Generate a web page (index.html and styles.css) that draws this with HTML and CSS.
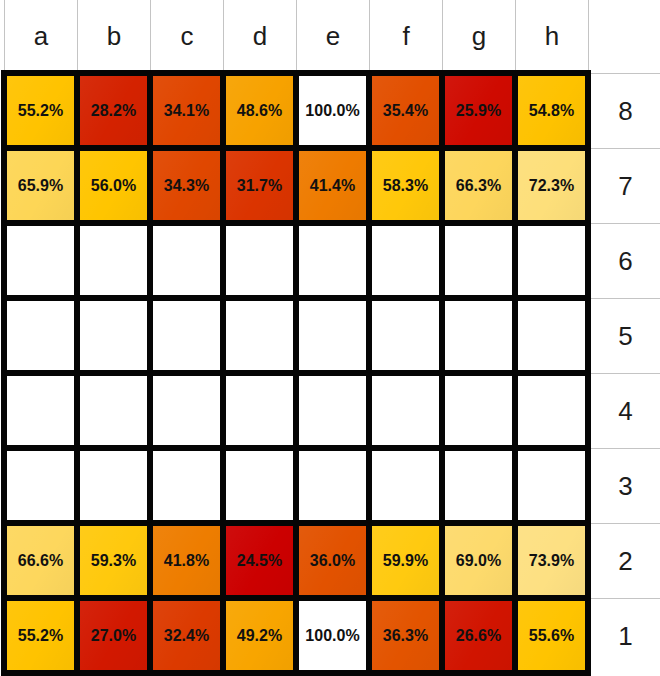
FILE: index.html
```html
<!DOCTYPE html>
<html>
<head>
<meta charset="utf-8">
<link rel="stylesheet" href="styles.css">
</head>
<body>
<div class="sheet">
  <div class="files">
    <div class="file">a</div><div class="file">b</div><div class="file">c</div><div class="file">d</div>
    <div class="file">e</div><div class="file">f</div><div class="file">g</div><div class="file">h</div>
    <div class="corner"></div>
  </div>
  <div class="body">
    <div class="board">
      <div class="sq heat" style="background-color:#ffc300">55.2%</div>
      <div class="sq heat" style="background-color:#d42200">28.2%</div>
      <div class="sq heat" style="background-color:#e04600">34.1%</div>
      <div class="sq heat" style="background-color:#f7a200">48.6%</div>
      <div class="sq">100.0%</div>
      <div class="sq heat" style="background-color:#e24f00">35.4%</div>
      <div class="sq heat" style="background-color:#cf0a00">25.9%</div>
      <div class="sq heat" style="background-color:#fec200">54.8%</div>

      <div class="sq heat" style="background-color:#fdd656">65.9%</div>
      <div class="sq heat" style="background-color:#ffc500">56.0%</div>
      <div class="sq heat" style="background-color:#e04700">34.3%</div>
      <div class="sq heat" style="background-color:#db3400">31.7%</div>
      <div class="sq heat" style="background-color:#ee7b00">41.4%</div>
      <div class="sq heat" style="background-color:#ffc80a">58.3%</div>
      <div class="sq heat" style="background-color:#fdd65c">66.3%</div>
      <div class="sq heat" style="background-color:#fddf7a">72.3%</div>

      <div class="sq"></div><div class="sq"></div><div class="sq"></div><div class="sq"></div>
      <div class="sq"></div><div class="sq"></div><div class="sq"></div><div class="sq"></div>
      <div class="sq"></div><div class="sq"></div><div class="sq"></div><div class="sq"></div>
      <div class="sq"></div><div class="sq"></div><div class="sq"></div><div class="sq"></div>
      <div class="sq"></div><div class="sq"></div><div class="sq"></div><div class="sq"></div>
      <div class="sq"></div><div class="sq"></div><div class="sq"></div><div class="sq"></div>
      <div class="sq"></div><div class="sq"></div><div class="sq"></div><div class="sq"></div>
      <div class="sq"></div><div class="sq"></div><div class="sq"></div><div class="sq"></div>

      <div class="sq heat" style="background-color:#fdd75d">66.6%</div>
      <div class="sq heat" style="background-color:#ffc90d">59.3%</div>
      <div class="sq heat" style="background-color:#ee7d00">41.8%</div>
      <div class="sq heat" style="background-color:#cc0000">24.5%</div>
      <div class="sq heat" style="background-color:#e25200">36.0%</div>
      <div class="sq heat" style="background-color:#ffca10">59.9%</div>
      <div class="sq heat" style="background-color:#fdda6c">69.0%</div>
      <div class="sq heat" style="background-color:#fde082">73.9%</div>

      <div class="sq heat" style="background-color:#ffc300">55.2%</div>
      <div class="sq heat" style="background-color:#d21800">27.0%</div>
      <div class="sq heat" style="background-color:#dc3a00">32.4%</div>
      <div class="sq heat" style="background-color:#f8a500">49.2%</div>
      <div class="sq">100.0%</div>
      <div class="sq heat" style="background-color:#e35400">36.3%</div>
      <div class="sq heat" style="background-color:#d11400">26.6%</div>
      <div class="sq heat" style="background-color:#ffc400">55.6%</div>
    </div>
    <div class="ranks">
      <div class="rank">8</div><div class="rank">7</div><div class="rank">6</div><div class="rank">5</div>
      <div class="rank">4</div><div class="rank">3</div><div class="rank">2</div><div class="rank">1</div>
    </div>
  </div>
</div>
</body>
</html>
```

FILE: styles.css
```css
html, body {
  margin: 0;
  padding: 0;
  background: #ffffff;
}

body {
  font-family: "Liberation Sans", Arial, sans-serif;
  width: 660px;
  height: 676px;
  overflow: hidden;
}

.sheet {
  display: flex;
  flex-direction: column;
}

.files {
  display: flex;
  height: 70px;
  padding-left: 4px;
}

.file {
  box-sizing: border-box;
  width: 73px;
  border-left: 1px solid #c4c4c4;
  display: flex;
  align-items: center;
  justify-content: center;
  padding-top: 3px;
  font-size: 26px;
  color: #1c1c1c;
}

.corner {
  flex: 1;
  border-left: 1px solid #c4c4c4;
}

.body {
  display: flex;
}

.board {
  margin-left: 1px;
  display: grid;
  grid-template-columns: repeat(8, 67px);
  grid-template-rows: repeat(8, 69px);
  gap: 6px;
  padding: 6px;
  background: #050505;
}

.sq {
  background-color: #ffffff;
  display: flex;
  align-items: center;
  justify-content: center;
  font-size: 16px;
  font-weight: bold;
  color: #111111;
}

.heat {
  background-image: linear-gradient(120deg, rgba(255, 255, 255, 0.05), rgba(255, 255, 255, 0) 55%, rgba(0, 0, 0, 0.03));
}

.ranks {
  flex: 1;
  display: flex;
  flex-direction: column;
  padding-top: 3px;
}

.rank {
  box-sizing: border-box;
  height: 75px;
  border-top: 1px solid #c4c4c4;
  display: flex;
  align-items: center;
  justify-content: center;
  font-size: 26px;
  color: #1c1c1c;
}
```
